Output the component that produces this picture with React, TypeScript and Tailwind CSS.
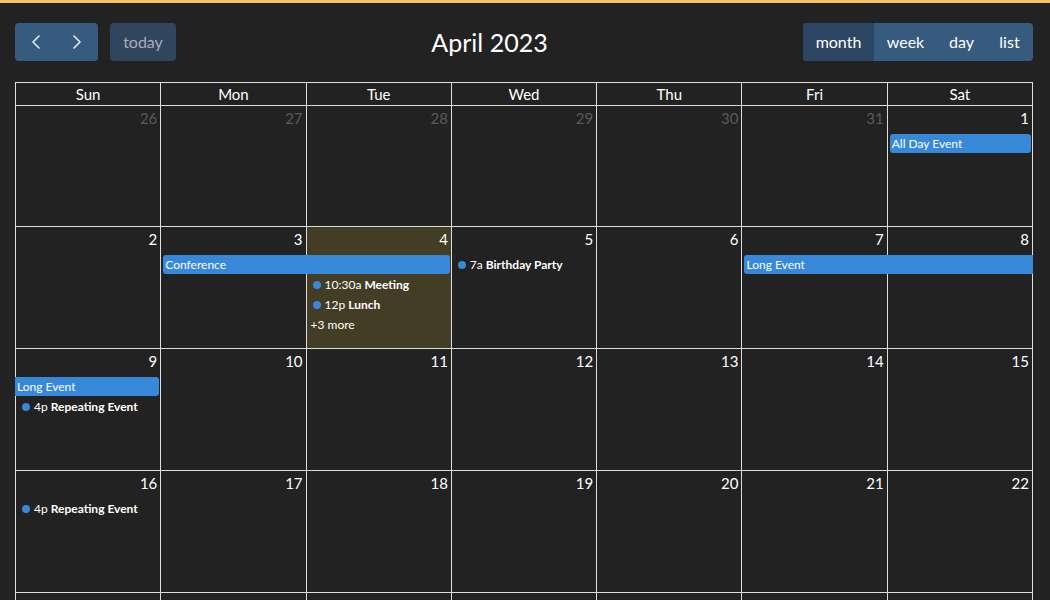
import clsx from "clsx";

type CalEvent =
  | { kind: "bar"; col: number; span: number; row: number; title: string; contL?: boolean; contR?: boolean }
  | { kind: "dot"; col: number; row: number; time: string; title: string }
  | { kind: "more"; col: number; row: number; text: string };

interface Week {
  days: number[];
  otherMonth: boolean[];
  today?: number;
  events: CalEvent[];
}

const colStart: Record<number, string> = {
  1: "col-start-1",
  2: "col-start-2",
  3: "col-start-3",
  4: "col-start-4",
  5: "col-start-5",
  6: "col-start-6",
  7: "col-start-7",
};

const colSpan: Record<number, string> = {
  1: "col-span-1",
  2: "col-span-2",
  3: "col-span-3",
};

const rowStart: Record<number, string> = {
  2: "row-start-2",
  3: "row-start-3",
  4: "row-start-4",
  5: "row-start-5",
};

const dayNames = ["Sun", "Mon", "Tue", "Wed", "Thu", "Fri", "Sat"];

const weeks: Week[] = [
  {
    days: [26, 27, 28, 29, 30, 31, 1],
    otherMonth: [true, true, true, true, true, true, false],
    events: [{ kind: "bar", col: 7, span: 1, row: 2, title: "All Day Event" }],
  },
  {
    days: [2, 3, 4, 5, 6, 7, 8],
    otherMonth: [false, false, false, false, false, false, false],
    today: 2,
    events: [
      { kind: "bar", col: 2, span: 2, row: 2, title: "Conference" },
      { kind: "dot", col: 3, row: 3, time: "10:30a", title: "Meeting" },
      { kind: "dot", col: 3, row: 4, time: "12p", title: "Lunch" },
      { kind: "more", col: 3, row: 5, text: "+3 more" },
      { kind: "dot", col: 4, row: 2, time: "7a", title: "Birthday Party" },
      { kind: "bar", col: 6, span: 2, row: 2, title: "Long Event", contR: true },
    ],
  },
  {
    days: [9, 10, 11, 12, 13, 14, 15],
    otherMonth: [false, false, false, false, false, false, false],
    events: [
      { kind: "bar", col: 1, span: 1, row: 2, title: "Long Event", contL: true },
      { kind: "dot", col: 1, row: 3, time: "4p", title: "Repeating Event" },
    ],
  },
  {
    days: [16, 17, 18, 19, 20, 21, 22],
    otherMonth: [false, false, false, false, false, false, false],
    events: [{ kind: "dot", col: 1, row: 2, time: "4p", title: "Repeating Event" }],
  },
  {
    days: [23, 24, 25, 26, 27, 28, 29],
    otherMonth: [false, false, false, false, false, false, false],
    events: [],
  },
];

function Chevron({ dir }: { dir: "left" | "right" }) {
  return (
    <svg width="10" height="14" viewBox="0 0 10 14" fill="none">
      <polyline
        points={dir === "left" ? "8,1 2,7 8,13" : "2,1 8,7 2,13"}
        stroke="#e6e9ee"
        strokeWidth="1.6"
        strokeLinecap="round"
        strokeLinejoin="round"
      />
    </svg>
  );
}

function EventItem({ ev }: { ev: CalEvent }) {
  if (ev.kind === "bar") {
    return (
      <div
        className={clsx(
          colStart[ev.col],
          colSpan[ev.span],
          rowStart[ev.row],
          "self-start h-[19px] bg-[#3788d8] pl-[2px] text-[12px] leading-[19px] text-white whitespace-nowrap overflow-hidden",
          ev.contL ? "ml-[-1px] rounded-l-none" : "ml-[2px] rounded-l-[3px]",
          ev.contR ? "mr-0 rounded-r-none" : "mr-[2px] rounded-r-[3px]",
        )}
      >
        {ev.title}
      </div>
    );
  }
  if (ev.kind === "dot") {
    return (
      <div
        className={clsx(
          colStart[ev.col],
          rowStart[ev.row],
          "flex items-center pl-[6px] text-[12px] text-white whitespace-nowrap overflow-hidden",
        )}
      >
        <span className="w-2 h-2 rounded-full bg-[#3788d8] shrink-0" />
        <span className="ml-[4px]">{ev.time}</span>
        <span className="ml-[3px] font-bold">{ev.title}</span>
      </div>
    );
  }
  return (
    <div
      className={clsx(
        colStart[ev.col],
        rowStart[ev.row],
        "flex items-center pl-[4px] text-[12px] text-white whitespace-nowrap",
      )}
    >
      {ev.text}
    </div>
  );
}

export default function App() {
  return (
    <div className="h-screen overflow-hidden bg-[#222222] font-[Lato,sans-serif] text-white">
      <div className="h-[3px] bg-[#f6c35c]" />
      <div className="ml-[15px] w-[1018px]">
        {/* toolbar */}
        <div className="mt-[20px] mb-[21px] flex h-[38px] items-center justify-between">
          <div className="flex items-center">
            <div className="flex h-[38px] overflow-hidden rounded-[4px] bg-[#375a7f]">
              <button className="flex w-[41px] items-center justify-center">
                <Chevron dir="left" />
              </button>
              <button className="flex w-[42px] items-center justify-center">
                <Chevron dir="right" />
              </button>
            </div>
            <button className="ml-[12px] h-[38px] w-[66px] rounded-[4px] bg-[#30465e] text-[16px] text-[#a9afb6]">
              today
            </button>
          </div>
          <h2 className="text-[25px] leading-none">April 2023</h2>
          <div className="flex h-[38px] overflow-hidden rounded-[4px] bg-[#375a7f] text-[16px]">
            <button className="w-[71px] bg-[#2c4764]">month</button>
            <button className="w-[63px]">week</button>
            <button className="w-[49px]">day</button>
            <button className="w-[47px]">list</button>
          </div>
        </div>

        {/* grid */}
        <div className="border-l border-t border-[#dddddd]">
          <div className="grid grid-cols-7">
            {dayNames.map((d) => (
              <div
                key={d}
                className="flex h-[23px] items-center justify-center border-b border-r border-[#dddddd] text-[15px]"
              >
                {d}
              </div>
            ))}
          </div>
          {weeks.map((w, wi) => (
            <div
              key={wi}
              className={clsx(
                "grid grid-cols-7 grid-rows-[28px_20px_20px_20px_20px_1fr]",
                wi === 0 ? "h-[121px]" : "h-[122px]",
              )}
            >
              {w.days.map((day, di) => (
                <div
                  key={di}
                  className={clsx(
                    colStart[di + 1],
                    "row-span-full border-b border-r border-[#dddddd] pr-[3px] pt-[2px] text-right text-[15px] leading-[20px]",
                    w.today === di && "bg-[#433d25]",
                    w.otherMonth[di] ? "text-[#5a5a5a]" : "text-white",
                  )}
                >
                  {wi < 4 ? day : null}
                </div>
              ))}
              {w.events.map((ev, ei) => (
                <EventItem key={ei} ev={ev} />
              ))}
            </div>
          ))}
        </div>
      </div>
    </div>
  );
}
